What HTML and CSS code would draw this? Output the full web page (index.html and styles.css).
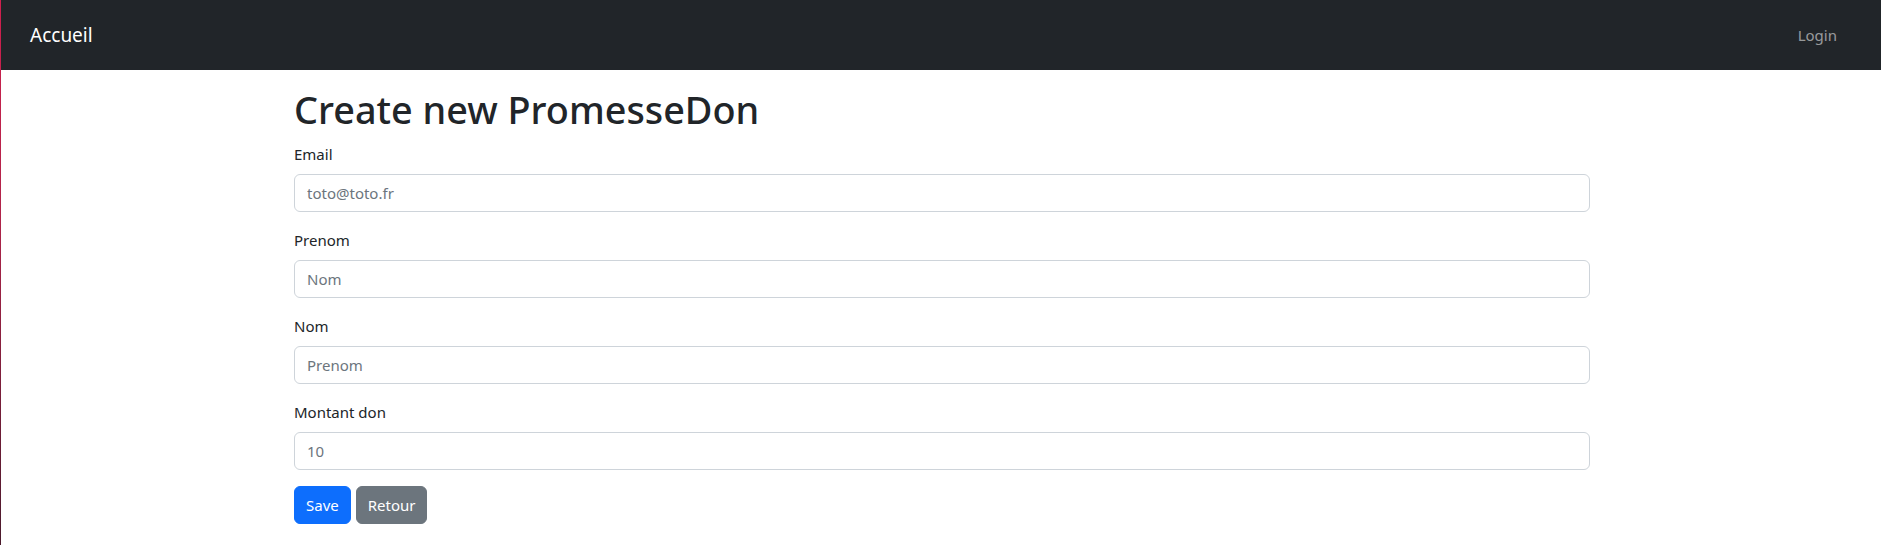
FILE: index.html
```html
<!DOCTYPE html>
<html lang="fr">
<head>
<meta charset="utf-8">
<title>Create new PromesseDon</title>
<link rel="stylesheet" href="styles.css">
</head>
<body>
<div class="page">
  <nav class="navbar">
    <a class="brand" href="#">Accueil</a>
    <ul class="nav">
      <li><a class="nav-link" href="#">Login</a></li>
    </ul>
  </nav>
  <main class="container">
    <h1 class="title">Create new PromesseDon</h1>
    <form class="form">
      <div class="field">
        <label class="label" for="email">Email</label>
        <input class="input" id="email" type="text" placeholder="toto@toto.fr">
      </div>
      <div class="field">
        <label class="label" for="prenom">Prenom</label>
        <input class="input" id="prenom" type="text" placeholder="Nom">
      </div>
      <div class="field">
        <label class="label" for="nom">Nom</label>
        <input class="input" id="nom" type="text" placeholder="Prenom">
      </div>
      <div class="field">
        <label class="label" for="montant">Montant don</label>
        <input class="input" id="montant" type="text" placeholder="10">
      </div>
      <div class="actions">
        <button class="btn btn-primary" type="button">Save</button>
        <a class="btn btn-secondary" href="#">Retour</a>
      </div>
    </form>
  </main>
</div>
</body>
</html>
```

FILE: styles.css
```css
* { box-sizing: border-box; }
html, body { margin: 0; padding: 0; }
body {
  font-family: "Noto Sans", "Open Sans", sans-serif;
  font-size: 16px;
  line-height: 1.5;
  color: #212529;
  background: #fff;
  overflow: hidden;
}
.page {
  height: 545px;
  border-left: 1px solid #c0224c;
  border-image: linear-gradient(to bottom, #d0204e 0%, #b0244a 40%, #4a1a2c 100%) 1;
}
.navbar {
  height: 70px;
  background: #212529;
  display: flex;
  align-items: center;
  justify-content: space-between;
  padding: 0 44px 0 29px;
}
.brand {
  color: #fff;
  text-decoration: none;
  font-size: 19px;
  line-height: 30px;
}
.nav { list-style: none; margin: 0; padding: 0; display: flex; }
.nav-link {
  color: rgba(255,255,255,.55);
  text-decoration: none;
  font-size: 15px;
  line-height: 24px;
}
.container {
  width: 1296px;
  margin: 0 0 0 calc(50% - 647px);
  padding-top: 16px;
}
.title {
  margin: 0 0 8px;
  font-size: 37.8px;
  font-weight: 500;
  line-height: 48px;
}
.field { margin-bottom: 16px; }
.label {
  display: block;
  margin-bottom: 8px;
  font-size: 15px;
  line-height: 24px;
}
.input {
  display: block;
  width: 100%;
  height: 38px;
  padding: 6px 12px;
  font-family: inherit;
  font-size: 15px;
  line-height: 24px;
  color: #212529;
  background: #fff;
  border: 1px solid #ced4da;
  border-radius: 6px;
  outline: none;
}
.input::placeholder { color: #6c757d; }
.actions { display: flex; gap: 5px; }
.btn {
  display: inline-flex;
  align-items: center;
  height: 38px;
  padding: 0 11px;
  font-family: inherit;
  font-size: 15px;
  line-height: 24px;
  color: #fff;
  border: 1px solid transparent;
  border-radius: 6px;
  text-decoration: none;
  cursor: pointer;
}
.btn-primary { background: #0d6efd; border-color: #0d6efd; }
.btn-secondary { background: #6c757d; border-color: #6c757d; }
```
